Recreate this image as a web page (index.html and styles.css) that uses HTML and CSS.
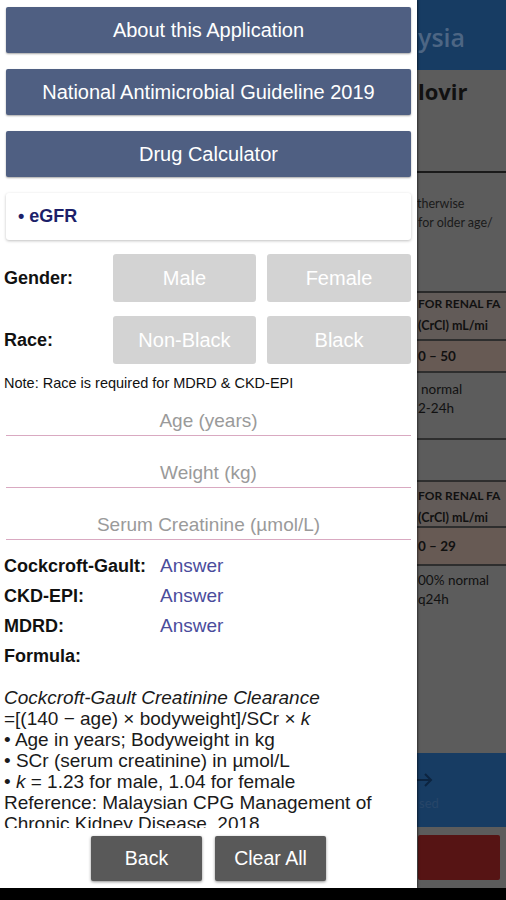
FILE: index.html
```html
<!DOCTYPE html>
<html>
<head>
<meta charset="utf-8">
<link rel="stylesheet" href="styles.css">
</head>
<body>
<div class="screen">
  <div class="backdrop">
    <div class="bd-header"><span class="clip c-ysia">ysia</span></div>
    <div class="bd-title"><span class="clip c-lovir">lovir</span></div>
    <div class="bd-note">
      <div class="clip c-oth">therwise</div>
      <div class="clip c-old">for older age/</div>
    </div>
    <div class="bd-head">
      <div class="clip c-for">FOR RENAL FA</div>
      <div class="clip c-crcl">(CrCl) mL/mi</div>
    </div>
    <div class="bd-range"><span class="clip c-r1">0 – 50</span></div>
    <div class="bd-dose">
      <div class="clip c-norm">normal</div>
      <div class="clip c-h">2-24h</div>
    </div>
    <div class="bd-empty"></div>
    <div class="bd-head bd-head2">
      <div class="clip c-for">FOR RENAL FA</div>
      <div class="clip c-crcl">(CrCl) mL/mi</div>
    </div>
    <div class="bd-range bd-range2"><span class="clip c-r1">0 – 29</span></div>
    <div class="bd-dose2">
      <div class="clip c-norm2">00% normal</div>
      <div class="clip c-h2">q24h</div>
    </div>
    <div class="bd-blue">
      <svg class="arrow" width="16" height="14" viewBox="0 0 16 14"><path d="M0 7H14M8 1L14 7L8 13" fill="none" stroke="#0c2440" stroke-width="2"/></svg>
      <div class="clip c-sed">sed</div>
    </div>
    <div class="bd-red-wrap"><div class="bd-red"></div></div>
  </div>

  <div class="panel">
    <div class="scroll">
      <div class="menu-btn">About this Application</div>
      <div class="menu-btn">National Antimicrobial Guideline 2019</div>
      <div class="menu-btn">Drug Calculator</div>
      <div class="card">• eGFR</div>

      <div class="choice-row">
        <div class="choice-label">Gender:</div>
        <div class="choice">Male</div>
        <div class="choice">Female</div>
      </div>
      <div class="choice-row">
        <div class="choice-label">Race:</div>
        <div class="choice">Non-Black</div>
        <div class="choice">Black</div>
      </div>
      <div class="note">Note: Race is required for MDRD &amp; CKD-EPI</div>

      <div class="field field-first">Age (years)</div>
      <div class="field">Weight (kg)</div>
      <div class="field">Serum Creatinine (µmol/L)</div>

      <div class="results">
        <div class="res-label">Cockcroft-Gault:</div><div class="res-val">Answer</div>
        <div class="res-label">CKD-EPI:</div><div class="res-val">Answer</div>
        <div class="res-label">MDRD:</div><div class="res-val">Answer</div>
        <div class="res-label">Formula:</div><div></div>
      </div>

      <div class="formula">
        <div><i>Cockcroft-Gault Creatinine Clearance</i></div>
        <div>=[(140 − age) × bodyweight]/SCr × <i>k</i></div>
        <div>• Age in years; Bodyweight in kg</div>
        <div>• SCr (serum creatinine) in µmol/L</div>
        <div>• <i>k</i> = 1.23 for male, 1.04 for female</div>
        <div>Reference: Malaysian CPG Management of</div>
        <div class="cut-line">Chronic Kidney Disease, 2018</div>
      </div>
    </div>
    <div class="bottom">
      <div class="act-btn">Back</div>
      <div class="act-btn">Clear All</div>
    </div>
  </div>
</div>
<div class="navbar"></div>
</body>
</html>
```

FILE: styles.css
```css
* { box-sizing: border-box; }
html, body { margin: 0; padding: 0; background: #000; }
body { width: 506px; height: 900px; overflow: hidden; font-family: "Liberation Sans", Arial, sans-serif; }

.screen { position: relative; width: 506px; height: 888px; overflow: hidden; background: #5c5c5c; }
.navbar { height: 12px; background: #000; }

/* underlying page, dimmed by the drawer scrim */
.backdrop { margin-left: 417px; width: 89px; height: 888px; display: flex; flex-direction: column; font-family: Lato, "Open Sans", sans-serif; color: #111; }
.clip { white-space: nowrap; display: block; }
.bd-header { height: 70px; background: #173c63; display: flex; align-items: center; flex-shrink: 0; }
.c-ysia { font-family: "Open Sans", sans-serif; font-size: 25px; font-weight: 600; color: #4d6684; margin-left: 1px; padding-top: 4px; }
.bd-title { height: 103px; flex-shrink: 0; border-bottom: 2px solid #1a1a1a; padding-top: 6px; }
.c-lovir { font-family: "Open Sans", sans-serif; font-weight: 700; font-size: 22px; color: #111; margin-left: 1px; }
.bd-note { height: 120px; flex-shrink: 0; padding-top: 21px; font-size: 12.5px; line-height: 19px; color: #1a1a1a; border-bottom: 2px solid #2a2a2a; }
.c-oth { margin-left: 0; }
.c-old { margin-left: 1px; }
.bd-head { height: 48px; flex-shrink: 0; background: #625b58; font-weight: 700; font-size: 12px; line-height: 22px; padding-top: 0; border-bottom: 2px solid #2e2e2e; }
.bd-head2 { height: 46px; padding-top: 3px; }
.c-for { margin-left: 1px; }
.c-crcl { margin-left: 1px; font-size: 12.5px; }
.bd-range { height: 32px; flex-shrink: 0; background: #675a54; font-weight: 700; font-size: 13.5px; line-height: 30px; border-bottom: 2px solid #2e2e2e; }
.bd-range2 { height: 38px; line-height: 36px; }
.c-r1 { margin-left: 1px; }
.bd-dose { height: 67px; flex-shrink: 0; padding-top: 7px; font-size: 13.5px; line-height: 19px; border-bottom: 2px solid #2e2e2e; }
.c-norm { margin-left: 4px; }
.c-h { margin-left: 1px; }
.bd-empty { height: 42px; flex-shrink: 0; border-bottom: 2px solid #2e2e2e; }
.bd-dose2 { height: 187px; flex-shrink: 0; padding-top: 5px; font-size: 13.5px; line-height: 19px; }
.c-norm2 { margin-left: 1px; }
.c-h2 { margin-left: 1px; }
.bd-blue { height: 74px; flex-shrink: 0; background: #173c63; padding-top: 20px; color: #0c2440; }
.arrow { display: block; margin-left: 0; }
.c-sed { font-size: 13px; margin-left: 2px; margin-top: 8px; color: #274669; }
.bd-red-wrap { flex: 1; padding: 8px 6px 0 1px; }
.bd-red { height: 45px; background: #561414; border-radius: 2px; }

/* drawer */
.panel { position: absolute; left: 0; top: 0; width: 417px; height: 888px; background: #fff; display: flex; flex-direction: column; box-shadow: 1px 0 2px rgba(0,0,0,0.5); }
.scroll { height: 828px; overflow: hidden; padding: 7px 6px 0 6px; flex-shrink: 0; }

.menu-btn { height: 46px; margin-bottom: 16px; background: #4f5f82; color: #fff; border-radius: 2px; display: flex; align-items: center; justify-content: center; font-size: 20px; box-shadow: 0 1px 2px rgba(0,0,0,0.35); padding-top: 1px; }
.card { height: 47px; margin-bottom: 14px; background: #fff; border-radius: 3px; box-shadow: 0 1px 3px rgba(0,0,0,0.25); display: flex; align-items: center; padding-left: 12px; color: #1c1f6a; font-weight: 700; font-size: 18px; }

.choice-row { display: grid; grid-template-columns: 96px 143px 144px; column-gap: 11px; height: 48px; margin-bottom: 14px; }
.choice-label { margin-left: -2px; align-self: center; font-weight: 700; font-size: 18px; color: #111; }
.choice { background: #d3d3d3; border-radius: 3px; color: #fff; display: flex; align-items: center; justify-content: center; font-size: 20px; }

.note { margin: -4px 0 0 -2px; font-size: 14.5px; line-height: 18px; height: 18px; color: #111; }

.field { height: 42px; margin-top: 10px; border-bottom: 1.5px solid #d9a9c1; display: flex; align-items: center; justify-content: center; color: #9a9a9a; font-size: 19px; padding-top: 13px; }
.field-first { margin-top: 2px; }

.results { display: grid; grid-template-columns: 156px 1fr; grid-auto-rows: 30px; align-items: center; margin: 11px 0 0 -2px; }
.res-label { font-weight: 700; font-size: 18px; color: #111; }
.res-val { font-size: 19px; color: #4a4c9c; }

.formula { margin: 16px 0 0 -2px; font-size: 19px; line-height: 21px; color: #1a1a1a; }

.bottom { height: 60px; display: flex; justify-content: flex-start; gap: 13px; padding: 8px 0 0 91px; }
.act-btn { width: 111px; height: 45px; background: #595959; color: #fff; border-radius: 2px; box-shadow: 0 1px 3px rgba(0,0,0,0.45); display: flex; align-items: center; justify-content: center; font-size: 19.5px; }
```
